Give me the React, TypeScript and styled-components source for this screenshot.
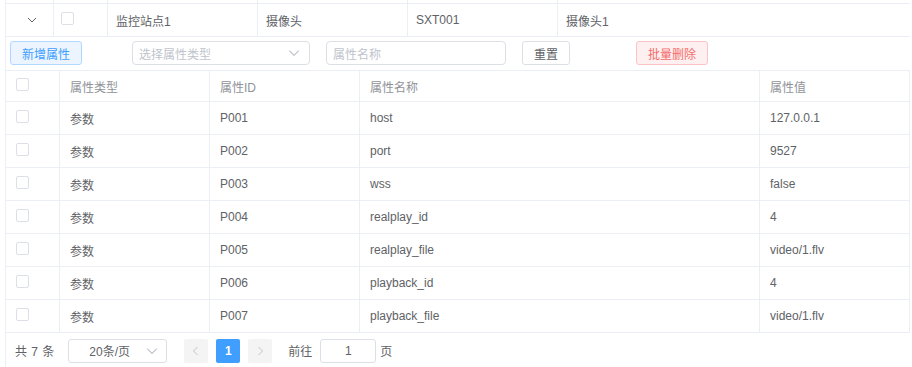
import React from "react";
import styled, { createGlobalStyle } from "styled-components";

const GlobalStyle = createGlobalStyle`
  html, body { margin: 0; padding: 0; background: #fff; }
  body {
    font-family: "Liberation Sans", "Noto Sans CJK SC", sans-serif;
    font-size: 12px;
    color: #606266;
  }
  * { box-sizing: border-box; }
`;

const BORDER = "#ebeef5";

const Page = styled.div`
  width: 912px;
  height: 367px;
  overflow: hidden;
  padding-left: 5px;
`;

const Frame = styled.div`
  width: 905px;
  border-left: 1px solid ${BORDER};
`;

const OuterGrid = styled.div`
  display: grid;
  grid-template-columns: 48px 54px 150px 150px 150px 1fr;
`;

const OCell = styled.div<{ $h: number; $last?: boolean; $center?: boolean; $pl?: number }>`
  height: ${(p) => p.$h}px;
  overflow: hidden;
  border-bottom: 1px solid ${BORDER};
  border-right: ${(p) => (p.$last ? "none" : `1px solid ${BORDER}`)};
  display: flex;
  align-items: center;
  justify-content: ${(p) => (p.$center ? "center" : "flex-start")};
  padding-left: ${(p) => (p.$pl ?? 8)}px;
  white-space: nowrap;
`;

const Check = styled.span`
  display: inline-block;
  width: 13px;
  height: 13px;
  border: 1px solid #dcdfe6;
  border-radius: 2px;
  background: #fff;
  margin-top: -3px;
`;

const Toolbar = styled.div`
  height: 33px;
  padding: 4px 0 0 4px;
  display: flex;
  align-items: flex-start;
`;

const Btn = styled.button<{ $variant: "primary" | "default" | "danger"; $w: number; $ml?: number }>`
  height: 24px;
  width: ${(p) => p.$w}px;
  margin-left: ${(p) => p.$ml ?? 0}px;
  padding: 0;
  font-family: inherit;
  font-size: 12px;
  border-radius: 3px;
  cursor: pointer;
  border: 1px solid
    ${(p) => (p.$variant === "primary" ? "#b3d8ff" : p.$variant === "danger" ? "#fbc4c4" : "#dcdfe6")};
  background: ${(p) => (p.$variant === "primary" ? "#ecf5ff" : p.$variant === "danger" ? "#fef0f0" : "#fff")};
  color: ${(p) => (p.$variant === "primary" ? "#409eff" : p.$variant === "danger" ? "#f56c6c" : "#606266")};
`;

const Field = styled.div<{ $w: number; $ml: number }>`
  width: ${(p) => p.$w}px;
  height: 24px;
  margin-left: ${(p) => p.$ml}px;
  border: 1px solid #dcdfe6;
  border-radius: 4px;
  display: flex;
  align-items: center;
  padding: 0 9px 0 6px;
  justify-content: space-between;
  color: #c0c4cc;
`;

const Inner = styled.div`
  width: 904px;
  border-top: 1px solid ${BORDER};
`;

const IRow = styled.div<{ $h: number }>`
  display: grid;
  grid-template-columns: 54px 150px 150px 400px 150px;
  height: ${(p) => p.$h}px;
`;

const ICell = styled.div<{ $head?: boolean; $pl?: number }>`
  border-right: 1px solid ${BORDER};
  border-bottom: 1px solid ${BORDER};
  display: flex;
  align-items: center;
  padding-left: ${(p) => p.$pl ?? 10}px;
  color: ${(p) => (p.$head ? "#909399" : "#606266")};
  white-space: nowrap;
  overflow: hidden;
`;

const Pager = styled.div`
  height: 35px;
  display: flex;
  align-items: center;
  padding-left: 9px;
  color: #606266;
`;

const Total = styled.span`
  word-spacing: 1px;
`;

const SizeSelect = styled.div`
  width: 99px;
  height: 24px;
  margin-left: 14px;
  border: 1px solid #dcdfe6;
  border-radius: 3px;
  display: flex;
  align-items: center;
  padding: 0 8px 0 20px;
  justify-content: space-between;
`;

const PageBtn = styled.div<{ $active?: boolean; $ml: number }>`
  width: 24px;
  height: 24px;
  margin-left: ${(p) => p.$ml}px;
  border-radius: 2px;
  display: flex;
  align-items: center;
  justify-content: center;
  background: ${(p) => (p.$active ? "#409eff" : "#f4f4f5")};
  color: ${(p) => (p.$active ? "#fff" : "#c0c4cc")};
  font-weight: ${(p) => (p.$active ? 700 : 400)};
`;

const Label = styled.span<{ $ml: number }>`
  margin-left: ${(p) => p.$ml}px;
`;

const JumpInput = styled.div`
  width: 56px;
  height: 24px;
  margin-left: 8px;
  border: 1px solid #dcdfe6;
  border-radius: 3px;
  display: flex;
  align-items: center;
  justify-content: center;
`;

const Chevron = ({ dir = "down", size = 10, color = "#c0c4cc" }: { dir?: "down" | "left" | "right"; size?: number; color?: string }) => {
  const pts =
    dir === "down" ? "1,3 5,7 9,3" : dir === "left" ? "6.5,1 2.5,5 6.5,9" : "3.5,1 7.5,5 3.5,9";
  return (
    <svg width={size} height={size} viewBox="0 0 10 10">
      <polyline points={pts} fill="none" stroke={color} strokeWidth="1" />
    </svg>
  );
};

const ExpandIcon = styled.span`
  display: inline-flex;
  margin-left: 4px;
`;

const rows = [
  ["P001", "host", "127.0.0.1"],
  ["P002", "port", "9527"],
  ["P003", "wss", "false"],
  ["P004", "realplay_id", "4"],
  ["P005", "realplay_file", "video/1.flv"],
  ["P006", "playback_id", "4"],
  ["P007", "playback_file", "video/1.flv"],
];

export default function App() {
  return (
    <Page>
      <GlobalStyle />
      <Frame>
        <OuterGrid>
          {[0, 1, 2, 3, 4, 5].map((i) => (
            <OCell key={i} $h={4} $last={i === 5} />
          ))}
          <OCell $h={33} $center $pl={0}>
            <ExpandIcon>
              <Chevron dir="down" size={10} color="#606266" />
            </ExpandIcon>
          </OCell>
          <OCell $h={33} $pl={7}>
            <Check />
          </OCell>
          <OCell $h={33}>监控站点1</OCell>
          <OCell $h={33}>摄像头</OCell>
          <OCell $h={33}>SXT001</OCell>
          <OCell $h={33} $last>
            摄像头1
          </OCell>
        </OuterGrid>
        <Toolbar>
          <Btn $variant="primary" $w={72}>新增属性</Btn>
          <Field $w={178} $ml={50}>
            <span>选择属性类型</span>
            <Chevron dir="down" size={12} />
          </Field>
          <Field $w={180} $ml={16}>
            <span>属性名称</span>
          </Field>
          <Btn $variant="default" $w={48} $ml={16}>重置</Btn>
          <Btn $variant="danger" $w={72} $ml={66}>批量删除</Btn>
        </Toolbar>
        <Inner>
          <IRow $h={31}>
            <ICell $head $pl={10}>
              <Check />
            </ICell>
            <ICell $head>属性类型</ICell>
            <ICell $head>属性ID</ICell>
            <ICell $head>属性名称</ICell>
            <ICell $head>属性值</ICell>
          </IRow>
          {rows.map(([id, name, val]) => (
            <IRow key={id} $h={33}>
              <ICell $pl={10}>
                <Check />
              </ICell>
              <ICell>参数</ICell>
              <ICell>{id}</ICell>
              <ICell>{name}</ICell>
              <ICell>{val}</ICell>
            </IRow>
          ))}
        </Inner>
        <Pager>
          <Total>共 7 条</Total>
          <SizeSelect>
            <span>20条/页</span>
            <Chevron dir="down" size={12} />
          </SizeSelect>
          <PageBtn $ml={17}>
            <Chevron dir="left" size={10} />
          </PageBtn>
          <PageBtn $ml={8} $active>
            1
          </PageBtn>
          <PageBtn $ml={8}>
            <Chevron dir="right" size={10} />
          </PageBtn>
          <Label $ml={16}>前往</Label>
          <JumpInput>1</JumpInput>
          <Label $ml={4}>页</Label>
        </Pager>
      </Frame>
    </Page>
  );
}
